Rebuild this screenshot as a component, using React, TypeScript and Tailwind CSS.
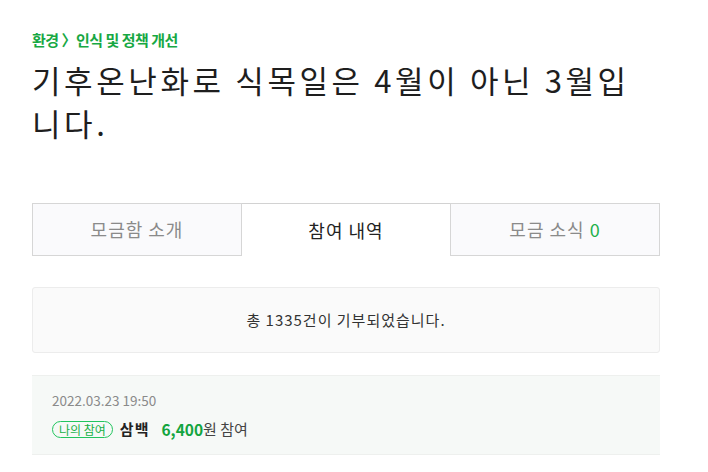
const FONT = { fontFamily: '"Noto Sans CJK KR", "Noto Sans", sans-serif' };

const tabs = [
  { label: "모금함 소개", active: false },
  { label: "참여 내역", active: true },
  { label: "모금 소식", active: false, count: 0 },
];

export default function App() {
  return (
    <div className="min-h-[472px] bg-white" style={FONT}>
      <div className="w-[628px] ml-[32px] pt-[30px]">
        <div className="text-[15px] leading-[20px] font-bold text-[#17a843] tracking-[-0.5px]">
          환경 〉인식 및 정책 개선
        </div>
        <h1 className="mt-2 text-[31px] leading-[43px] text-[#1e1e1e] tracking-[3.6px] break-all">
          기후온난화로 식목일은 4월이 아닌 3월입니다.
        </h1>

        <div className="mt-[59px] flex h-[53px]">
          {tabs.map((t) =>
            t.active ? (
              <div
                key={t.label}
                className="flex-1 flex items-center justify-center bg-white border-t border-[#d2d2d2] text-[18px] tracking-[1px] text-[#222]"
              >
                {t.label}
              </div>
            ) : (
              <div
                key={t.label}
                className="flex-1 flex items-center justify-center bg-[#fafafc] border border-[#d6d6d6] text-[18px] tracking-[1px] text-[#8a8a8a]"
              >
                {t.label}
                {t.count !== undefined && <span className="ml-[5px] text-[#1fb14c]">{t.count}</span>}
              </div>
            )
          )}
        </div>

        <div className="mt-[31px] h-[66px] flex items-center justify-center rounded-[3px] border border-[#ececec] bg-[#fafafa] text-[15px] tracking-[1px] text-[#333]">
          총 1335건이 기부되었습니다.
        </div>

        <div className="mt-[22px] h-[80px] border-y border-[#eef0ee] bg-[#f6f9f7] pl-[20px] pt-[14px]">
          <div className="text-[13.5px] leading-[20px] text-[#8a8a8a]">2022.03.23 19:50</div>
          <div className="mt-[8px] flex items-center">
            <span className="h-[17px] px-[6px] flex items-center rounded-full border border-[#22c55e] text-[12px] text-[#17b046] leading-none">
              나의 참여
            </span>
            <span className="ml-[7px] text-[15px] tracking-[1px] font-bold text-[#222]">삼백</span>
            <span className="ml-[12px] text-[15.5px] font-bold text-[#13a53f]">6,400</span>
            <span className="text-[15px] text-[#444]">원 참여</span>
          </div>
        </div>
      </div>
    </div>
  );
}
